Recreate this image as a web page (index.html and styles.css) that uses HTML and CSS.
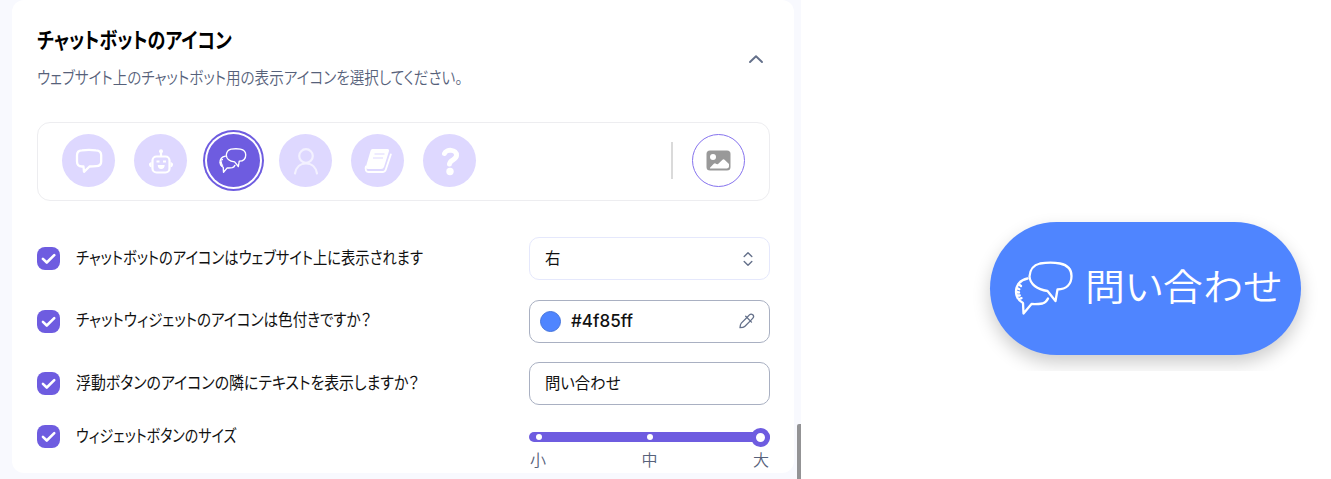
FILE: index.html
```html
<!DOCTYPE html>
<html lang="ja">
<head>
<meta charset="utf-8">
<title>チャットボットのアイコン</title>
<link rel="stylesheet" href="styles.css">
</head>
<body>
<svg class="defs" width="0" height="0">
  <symbol id="tick" viewBox="0 0 24 24"><path d="M6.2 12.4l4 3.8 7.8-7.7" fill="none" stroke="#fff" stroke-width="2.7" stroke-linecap="round" stroke-linejoin="round"/></symbol>
  <symbol id="bubbles" viewBox="0 0 60 54">
    <g fill="none" stroke="#fff" stroke-linecap="round" stroke-linejoin="round">
      <path d="M26 2.500C33 1.300 40 1.300 46 2.500c7 1.500 11.500 6 11.500 12.500C57.500 23 52.500 28.300 43.500 28.500L41.500 40 33.500 30C23 28.500 16 23 15.500 15.500 16 8 19.500 4 26 2.500z"/>
      <path d="M13.500 17.500C6 19 2 24.500 2 30.500c0 5.500 2.500 9 7 11.500L9.500 52.500l8-9.500c3.500.300 8 0 11-.500 2.500-.800 4.500-2.800 5.500-5"/>
      <path d="M5 23.500l2 1.500M3 27l2.300 1.200M2.500 31l2.500.500M3 34.500l2.800 0M5 38l2.500-.800"/>
    </g>
  </symbol>
</svg>
<div class="page">
  <main class="pane">
    <section class="card">
      <header class="head">
        <div>
          <h1 class="title">チャットボットのアイコン</h1>
          <p class="desc">ウェブサイト上のチャットボット用の表示アイコンを選択してください。</p>
        </div>
        <svg class="chevron" width="16" height="10" viewBox="0 0 16 10"><path d="M2 8l6-5.800L14 8" fill="none" stroke="#64708a" stroke-width="1.900" stroke-linecap="round" stroke-linejoin="round"/></svg>
      </header>

      <div class="picker">
        <div class="choices">
          <span class="choice"><svg width="53" height="53" viewBox="0 0 53 53"><path d="M20 16.300q7-.700 14 0 5.200.200 5.200 5v6.200q0 4.500-5 4.700-3 .300-6.700.300l-5.500 5.300-.500-5.300h-1.500q-5 0-5-5v-6.200q0-5 5-5z" fill="none" stroke="#fff" stroke-width="2.300" stroke-linejoin="round"/></svg></span>
          <span class="choice"><svg width="53" height="53" viewBox="0 0 53 53"><g fill="none" stroke="#fff" stroke-width="2.200"><rect x="18.500" y="22.500" width="17" height="16" rx="4"/><path d="M27 22v-4"/><path d="M22.500 27.500h3M29 27.500h3" stroke-width="1.800"/></g><circle cx="27" cy="17.300" r="2" fill="#fff"/><path d="M17.500 28q-3 1-2.500 3t2.500 2.500zM36.500 28q3 1 2.500 3t-2.500 2.500zM23.700 31h7q-.200 4-3.500 4t-3.500-4z" fill="#fff"/></svg></span>
          <span class="choice selected"><svg class="mini-bubbles" width="28" height="25"><use href="#bubbles"/></svg></span>
          <span class="choice"><svg width="53" height="53" viewBox="0 0 53 53"><g fill="none" stroke="#f3f1ff" stroke-width="2.200" stroke-linecap="round"><circle cx="27" cy="22" r="6.800"/><path d="M16 39.500c1-6 5-10 11-10s10 4 11 10"/></g></svg></span>
          <span class="choice"><svg width="53" height="53" viewBox="0 0 53 53"><path d="M21.500 15h15q2 0 1.500 2l-5 16q-.600 2-3 2H17.500q-2 0-3-1l5-17q.500-2 2-2z" fill="#fff"/><path d="M15 32.500q-1 2 0 4 .800 1.500 2.500 1.500h14q2.500 0 3.300-2.500l5-15" fill="none" stroke="#fff" stroke-width="1.900" stroke-linecap="round"/><path d="M16.500 36.300h14.300q2 0 2.700-2" fill="none" stroke="#ded8ff" stroke-width=".8"/><path d="M23.500 20h10M22 24h10" stroke="#ded8ff" stroke-width="1.200"/></svg></span>
          <span class="choice"><svg width="53" height="53" viewBox="0 0 53 53"><path d="M21.500 19.500c1.500-4.500 12.500-4.500 12 2-.300 4.500-6.500 4-7 8.500" fill="none" stroke="#fff" stroke-width="5" stroke-linecap="round"/><circle cx="27" cy="37.500" r="3.700" fill="#fff"/></svg></span>
        </div>
        <span class="divider"></span>
        <span class="upload"><svg width="25" height="21" viewBox="0 0 25 21"><rect x=".5" y=".5" width="24" height="20" rx="3.500" fill="#999"/><circle cx="7" cy="7" r="3" fill="#fff"/><path d="M4 18.500v-.700l3.800-4q1.200-1 2.500.200l1.500.300 4.700-4.500q1.200-1 2.300.200L23 14v2.500q0 1.500-2 2z" fill="#fff"/></svg></span>
      </div>

      <div class="row">
        <svg class="check"><use href="#tick"/></svg>
        <span class="label l1">チャットボットのアイコンはウェブサイト上に表示されます</span>
        <div class="field select"><span class="value">右</span><svg width="10" height="14" viewBox="0 0 10 14"><path d="M1.200 4.500L5 .8l3.800 3.700M1.200 9.500L5 13.200l3.800-3.700" fill="none" stroke="#64708a" stroke-width="1.400" stroke-linecap="round" stroke-linejoin="round"/></svg></div>
      </div>
      <div class="row">
        <svg class="check"><use href="#tick"/></svg>
        <span class="label l2">チャットウィジェットのアイコンは色付きですか？</span>
        <div class="field color"><span class="swatch"></span><span class="hex">#4f85ff</span><svg width="16" height="16" viewBox="0 0 16 16"><path d="M8.200 4.200L2.300 10.100Q1.200 11.300 1 14.700q3.500 0 4.700-1.200l5.900-5.900M6.700 3.300l5.800 5.800M8.200 4.200l2.200-2.300q1.600-1.600 3.400-.1 1.600 1.700.1 3.300l-2.300 2.500" fill="none" stroke="#64708a" stroke-width="1.300" stroke-linecap="round" stroke-linejoin="round"/></svg></div>
      </div>
      <div class="row">
        <svg class="check"><use href="#tick"/></svg>
        <span class="label l3">浮動ボタンのアイコンの隣にテキストを表示しますか？</span>
        <div class="field"><span class="value">問い合わせ</span></div>
      </div>
      <div class="row size">
        <svg class="check"><use href="#tick"/></svg>
        <span class="label l4">ウィジェットボタンのサイズ</span>
        <div class="slider">
          <div class="track"><i class="dot"></i><i class="dot"></i><i class="thumb"></i></div>
          <div class="marks"><span>小</span><span>中</span><span>大</span></div>
        </div>
      </div>
    </section>
    <span class="scrollbar"></span>
  </main>
  <aside class="preview">
    <div class="stage">
      <div class="launcher"><svg class="big-bubbles" width="60" height="54"><use href="#bubbles"/></svg><span>問い合わせ</span></div>
    </div>
  </aside>
</div>
</body>
</html>
```
FILE: styles.css
```css
* { box-sizing: border-box; }
body {
  margin: 0;
  background: #fff;
  color: #111;
  font: 16px/24px "Noto Sans CJK JP", sans-serif;
  font-feature-settings: "palt";
}
svg { display: block; flex: none; }
.defs { position: absolute; }
.page { display: flex; width: 1331px; height: 479px; overflow: hidden; }
.pane {
  position: relative;
  width: 801px;
  height: 479px;
  padding: 0 7px 6px 12px;
  background: #f8f9fe;
}
.card {
  height: 473px;
  padding: 25px 24px 0 25px;
  background: #fff;
  border-radius: 12px;
}
.scrollbar {
  position: absolute;
  right: 0;
  bottom: 0;
  width: 4px;
  height: 55px;
  background: #939395;
  border-radius: 2px 0 0;
}
.head { display: flex; justify-content: space-between; height: 97px; }
.title, .desc, .label { margin: 0; white-space: nowrap; transform-origin: left center; }
.title { font-size: 21.500px; line-height: 28px; font-weight: 700; color: #000; transform: scaleX(.84); }
.desc { margin-top: 12px; font-size: 17px; color: #56617a; font-weight: 350; transform: scaleX(.858); }
.chevron { margin: 29px 6px 0 0; }
.picker {
  display: flex;
  align-items: center;
  width: 733px;
  height: 79px;
  padding: 0 24px 2px;
  border: 1px solid #ededf0;
  border-radius: 13px;
  margin-bottom: 36px;
}
.choices { display: flex; gap: 19.300px; flex: 1; }
.choice {
  width: 53px;
  height: 53px;
  border-radius: 50%;
  background: #ded8ff;
}
.selected {
  display: flex;
  align-items: center;
  justify-content: center;
  background: #6e5ce0;
  box-shadow: 0 0 0 2px #fff, 0 0 0 4px #6e5ce0;
}
.mini-bubbles { stroke-width: 2.900px; }
.divider { width: 2px; height: 37px; background: #dadada; margin-right: 19px; }
.upload {
  display: flex;
  align-items: center;
  justify-content: center;
  width: 53px;
  height: 53px;
  border: 1px solid #8673ee;
  border-radius: 50%;
}
.row { display: flex; align-items: center; height: 43px; margin-bottom: 19.700px; }
.check { width: 23px; height: 23px; border-radius: 8px; background: #6e5ce0; }
.label { width: 453px; margin-left: 16px; padding-bottom: 4px; font-size: 17px; }
.l1 { transform: scaleX(.842); }
.l2 { transform: scaleX(.857); }
.l3 { transform: scaleX(.878); }
.l4 { transform: scaleX(.825); }
.field {
  display: flex;
  align-items: center;
  width: 241px;
  height: 43px;
  padding: 0 15px;
  border: 1px solid #a9b0c2;
  border-radius: 10px;
}
.value { padding-bottom: 3px; transform: scaleX(.96); transform-origin: left; }
.select { justify-content: space-between; padding-right: 16px; border-color: #e5e8fc; }
.color { padding-left: 10px; padding-right: 14px; }
.swatch { width: 21px; height: 21px; border-radius: 50%; background: #4f85ff; border: 1px solid #4675dc; }
.hex { flex: 1; margin-left: 10px; font-family: Inter, sans-serif; font-size: 17px; font-weight: 450; color: #111; }
.size { height: 44px; align-items: flex-start; margin-top: -7px; }
.size .check { margin-top: 7px; }
.size .label { margin-top: 5px; padding: 0; }
.slider { width: 241px; padding-top: 10px; }
.track {
  display: flex;
  align-items: center;
  justify-content: space-between;
  width: 241px;
  height: 10px;
  padding-left: 7px;
  margin-top: 4px;
  border-radius: 5px;
  background: #6e5ce0;
}
.dot { width: 6px; height: 6px; border-radius: 50%; background: #fff; }
.dot + .dot { margin-left: 7px; }
.thumb { width: 19px; height: 19px; border: 5px solid #6e5ce0; border-radius: 50%; background: #fff; }
.marks { display: flex; justify-content: space-between; padding: 0 1px; line-height: 24px; margin-top: 5px; color: #56617a; font-weight: 350; }
.preview { flex: 1; padding: 191px 0 0 159px; }
.stage { height: 180px; padding: 31px 0 0 30px; overflow: hidden; }
.launcher {
  display: flex;
  align-items: center;
  width: 311px;
  height: 133px;
  padding-left: 24px;
  border-radius: 67px;
  background: #4f85ff;
  box-shadow: 0 8px 18px rgba(0, 0, 0, .2);
  color: #fff;
}
.launcher span { margin: 0 0 7px 11px; font-size: 40px; line-height: 60px; font-weight: 350; white-space: nowrap; transform: scaleY(.93); }
.big-bubbles { stroke-width: 2.300px; margin-bottom: 1px; }
```
